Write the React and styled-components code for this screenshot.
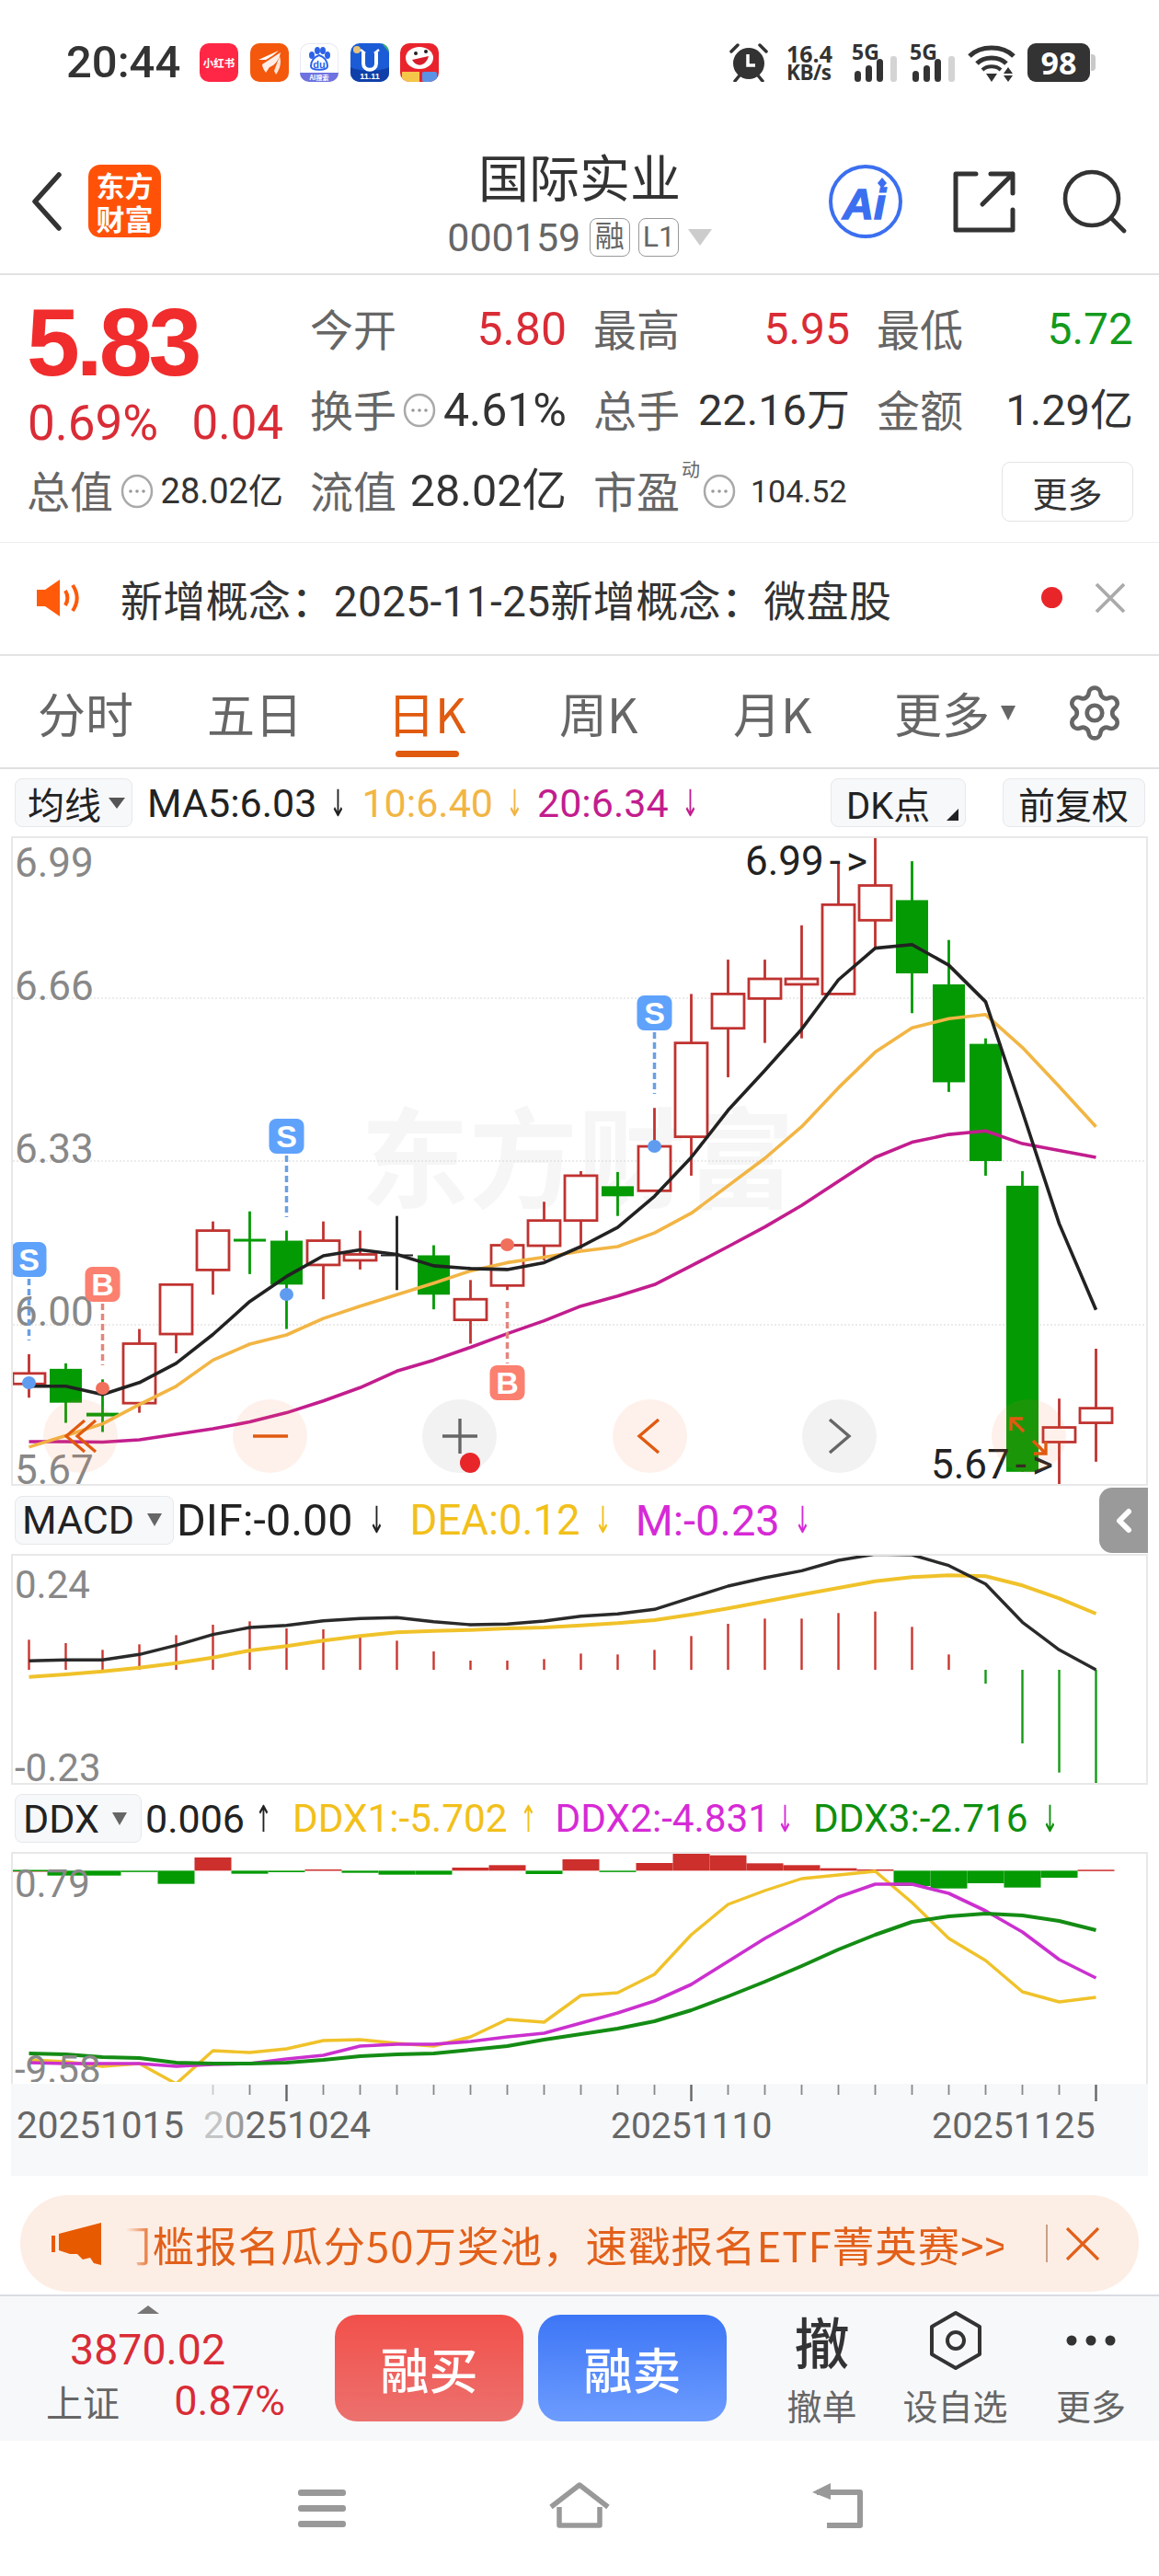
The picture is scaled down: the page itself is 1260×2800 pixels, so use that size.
import styled, { createGlobalStyle } from "styled-components";
import { ChevronLeft, Settings } from "lucide-react";

const sans = `Roboto, "Noto Sans CJK SC", sans-serif`;
const RED = "#d92c36";
const GREEN = "#149a1c";

// candle samples were read off the reference at 2.01 units per pixel
const toY = (v) => 860 + v / 2.01;
const slotX = (i) => 31.5 + 40 * i;

const candles = [
  ["r", 1230, 1272, 1295, 1325], ["g", 1250, 1262, 1336, 1380], ["g", 1285, 1358, 1366, 1400],
  ["r", 1175, 1207, 1337, 1358], ["r", 1078, 1078, 1186, 1228], ["r", 940, 960, 1046, 1100],
  ["g", 918, 978, 984, 1055], ["g", 960, 982, 1078, 1175], ["r", 940, 982, 1035, 1110],
  ["r", 960, 1012, 1025, 1045], ["k", 928, 1012, 1015, 1090], ["g", 992, 1014, 1100, 1132],
  ["r", 1068, 1110, 1155, 1207], ["r", 985, 992, 1080, 1090], ["r", 897, 938, 993, 1025],
  ["r", 830, 840, 938, 1000], ["g", 832, 863, 885, 928], ["r", 692, 776, 873, 873],
  ["r", 443, 550, 755, 840], ["r", 368, 443, 518, 625], ["r", 368, 410, 453, 550],
  ["r", 293, 410, 422, 540], ["r", 155, 248, 443, 443], ["r", 100, 206, 282, 343],
  ["g", 153, 238, 398, 485], ["g", 325, 422, 636, 657], ["g", 540, 552, 808, 840],
  ["g", 830, 862, 1487, 1487], ["r", 1327, 1390, 1422, 1518], ["r", 1218, 1348, 1380, 1465],
];
const ma5 = [1300, 1300, 1318, 1292, 1250, 1187, 1115, 1060, 1015, 1002, 1012, 1037, 1043, 1045, 1030, 995, 953, 885, 800, 697, 610, 520, 412, 343, 335, 380, 460, 700, 945, 1133];
const ma10 = [1433, 1408, 1382, 1340, 1300, 1243, 1208, 1188, 1152, 1125, 1100, 1075, 1048, 1030, 1018, 1005, 995, 965, 922, 862, 802, 733, 648, 570, 517, 497, 488, 560, 645, 733];
const ma20 = [1421, 1421, 1422, 1417, 1405, 1393, 1378, 1358, 1332, 1303, 1267, 1243, 1215, 1185, 1157, 1125, 1103, 1078, 1037, 995, 952, 905, 852, 800, 767, 750, 742, 770, 785, 800];

const signals = [
  { i: 0, kind: "S", badge: 1350, from: 1390, to: 1457, dot: 1503 },
  { i: 2, kind: "B", badge: 1377, from: 1417, to: 1484, dot: 1509 },
  { i: 7, kind: "S", badge: 1216, from: 1256, to: 1323, dot: 1407 },
  { i: 13, kind: "B", badge: 1484, from: 1415, to: 1482, dot: 1353 },
  { i: 17, kind: "S", badge: 1082, from: 1122, to: 1189, dot: 1246 },
];

// macd samples, page y = 1620 + v / 3
const macdY = (v) => 1620 + v / 3;
const dif = [556, 553, 553, 535, 505, 470, 447, 440, 425, 418, 415, 428, 438, 436, 426, 410, 403, 388, 350, 312, 285, 262, 228, 208, 210, 245, 305, 430, 520, 585];
const dea = [608, 600, 590, 578, 563, 545, 522, 508, 490, 475, 463, 458, 455, 450, 447, 440, 433, 423, 405, 385, 362, 340, 318, 296, 283, 277, 280, 310, 352, 402];
const macdBars = [487, 498, 520, 502, 472, 438, 427, 450, 453, 472, 490, 525, 555, 555, 550, 532, 535, 520, 475, 435, 418, 418, 400, 395, 445, 535, 630, 825, 920, 960];

const ddxBars = [1239, 1256, 1256, 1243, 1283, 1197, 1250, 1245, 1236, 1247, 1253, 1253, 1230, 1222, 1251, 1203, 1241, 1215, 1182, 1190, 1216, 1222, 1232, 1236, 1290, 1298, 1281, 1295, 1263, 1237];
const ddx1 = [2239, 2241, 2246, 2243, 2265, 2229, 2231, 2227, 2218, 2217, 2221, 2224, 2214, 2195, 2198, 2169, 2166, 2146, 2103, 2070, 2055, 2042, 2038, 2034, 2068, 2107, 2131, 2165, 2176, 2171];
const ddx2 = [2242, 2243, 2243, 2243, 2246, 2244, 2243, 2238, 2234, 2224, 2222, 2222, 2219, 2214, 2210, 2199, 2188, 2175, 2157, 2132, 2107, 2085, 2062, 2048, 2048, 2058, 2077, 2100, 2130, 2150];
const ddx3 = [2232, 2233, 2236, 2237, 2242, 2243, 2243, 2242, 2239, 2235, 2233, 2232, 2228, 2224, 2217, 2211, 2205, 2197, 2185, 2170, 2154, 2137, 2119, 2103, 2089, 2083, 2080, 2082, 2088, 2098];

const linePoints = (values, mapY = (v) => v) => values.map((v, i) => `${slotX(i)},${mapY(v).toFixed(1)}`).join(" ");

const GlobalStyle = createGlobalStyle`
  html, body { margin: 0; padding: 0; background: #fff; }
  body { font-family: ${sans}; }
  * { box-sizing: border-box; }
`;

const Page = styled.div`
  width: 1260px;
  height: 2800px;
  overflow: hidden;
  background: #fff;
  color: #333;
`;

/* status bar */
const StatusBar = styled.div`
  height: 130px;
  padding: 47px 70px 0 72px;
  display: flex;
  justify-content: space-between;
  align-items: flex-start;
`;
const StatusLeft = styled.div`
  display: flex;
  align-items: center;
  height: 42px;
`;
const Clock = styled.span`
  width: 145px;
  font-size: 49px;
  font-weight: 500;
  color: #333;
  line-height: 42px;
`;
const AppRow = styled.div`
  display: flex;
  gap: 12.6px;
`;
const AppIcon = styled.div`
  width: 42px;
  height: 42px;
  border-radius: 10px;
  overflow: hidden;
  background: ${(p) => p.$bg};
  display: flex;
  align-items: center;
  justify-content: center;
  color: #fff;
  font-size: 11.5px;
  font-weight: 700;
  font-family: "Noto Sans CJK SC", sans-serif;
  white-space: nowrap;
  svg { display: block; }
`;
const StatusRight = styled.div`
  display: flex;
  align-items: center;
  gap: 13px;
  height: 42px;
  svg { display: block; }
`;
const Speed = styled.div`
  width: 51px;
  margin: 0 7px;
  font-family: "Open Sans", sans-serif;
  font-weight: 700;
  color: #333;
  font-size: 25px;
  line-height: 22px;
  white-space: nowrap;
  small { display: block; font-size: 22.5px; line-height: 20px; letter-spacing: -0.5px; }
`;
const Battery = styled.div`
  width: 68px;
  height: 42px;
  margin-right: 5px;
  border-radius: 9px;
  background: #333;
  color: #fff;
  font-family: "Open Sans", sans-serif;
  font-weight: 700;
  font-size: 34px;
  line-height: 42px;
  text-align: center;
  position: relative;
  &::after {
    content: "";
    position: absolute;
    right: -6px;
    top: 12px;
    width: 5px;
    height: 18px;
    border-radius: 0 4px 4px 0;
    background: #c9c9c9;
  }
`;

/* title header */
const Header = styled.header`
  height: 169px;
  border-bottom: 2px solid #e2e2e2;
  display: grid;
  grid-template-columns: 1fr auto 1fr;
`;
const HeaderSide = styled.div`
  display: flex;
  align-items: center;
  padding-top: 10px;
  justify-content: ${(p) => (p.$right ? "flex-end" : "flex-start")};
  padding-left: ${(p) => (p.$right ? 0 : 32)}px;
  padding-right: ${(p) => (p.$right ? 35 : 0)}px;
  gap: ${(p) => (p.$right ? 50 : 26)}px;
`;
const LogoTile = styled.div`
  width: 79px;
  height: 79px;
  border-radius: 13px;
  background: #ff5208;
  color: #fff;
  font-family: "Noto Sans CJK SC", sans-serif;
  font-weight: 700;
  font-size: 31px;
  line-height: 36px;
  text-align: center;
  padding-top: 4px;
`;
const TitleBlock = styled.div`
  display: flex;
  flex-direction: column;
  align-items: center;
  padding-top: 30px;
`;
const StockName = styled.h1`
  margin: 0;
  height: 60px;
  font-size: 55px;
  line-height: 60px;
  font-weight: 400;
  color: #333;
  font-family: "Noto Sans CJK SC", sans-serif;
`;
const CodeRow = styled.div`
  margin-top: 16px;
  height: 44px;
  display: flex;
  align-items: center;
  gap: 9.5px;
  font-size: 43px;
  color: #666;
`;
const TagBox = styled.span`
  width: 44px;
  height: 42px;
  border: 1.5px solid #999;
  border-radius: 8px;
  color: #666;
  font-size: 32px;
  line-height: 38px;
  text-align: center;
`;
const DownTriangle = styled.i`
  display: block;
  width: 0;
  height: 0;
  border-left: ${(p) => p.$w / 2}px solid transparent;
  border-right: ${(p) => p.$w / 2}px solid transparent;
  border-top: ${(p) => p.$h}px solid ${(p) => p.$color};
`;

/* quote block */
const QuoteGrid = styled.section`
  height: 291px;
  padding: 15px 0 0 32px;
  border-bottom: 1px solid #ececec;
  display: grid;
  grid-template-columns: repeat(4, 276px);
  grid-auto-rows: 88px;
  column-gap: 32px;
`;
const Stat = styled.div`
  display: flex;
  align-items: center;
  justify-content: ${(p) => p.$justify || "space-between"};
  padding-top: ${(p) => p.$drop || 0}px;
  margin-left: ${(p) => p.$nudge || 0}px;
  white-space: nowrap;
`;
const BigPrice = styled.span`
  font-size: 104px;
  font-weight: 700;
  letter-spacing: -4px;
  font-family: "Liberation Sans", sans-serif;
  color: #f02c2c;
  line-height: 88px;
`;
const Label = styled.span`
  font-size: 47px;
  color: #666;
  font-family: "Noto Sans CJK SC", sans-serif;
  font-weight: 400;
  line-height: 60px;
  margin: 0 0 5px -3px;
`;
const Value = styled.span`
  font-size: ${(p) => p.$size || 48}px;
  color: ${(p) => p.$color || "#333"};
  line-height: 60px;
`;
const SuperMark = styled.sup`
  font-size: 20px;
  color: #666;
  align-self: flex-start;
  line-height: 20px;
  margin: 10px 3px 0 2px;
  font-family: "Noto Sans CJK SC", sans-serif;
`;
const MoreButton = styled.button`
  width: 143px;
  height: 65px;
  padding: 0;
  border: 1.5px solid #e4e4e4;
  border-radius: 9px;
  background: #fff;
  font: 400 38px "Noto Sans CJK SC", sans-serif;
  color: #333;
`;

/* notice */
const NoticeBar = styled.div`
  height: 123px;
  padding: 0 36px 2px 40px;
  border-bottom: 2px solid #e3e3e3;
  display: flex;
  align-items: center;
  color: #333;
`;
const NoticeText = styled.span`
  margin-left: 41px;
  flex: 1;
  font-size: 46px;
  letter-spacing: 0.35px;
  white-space: nowrap;
`;
const NoticeDot = styled.i`
  width: 23px;
  height: 23px;
  border-radius: 50%;
  background: #e8262a;
  margin-right: 35px;
`;

/* period tabs */
const TabBar = styled.nav`
  height: 123px;
  padding-top: 2px;
  border-bottom: 2px solid #e0e0e0;
  display: grid;
  grid-template-columns: 41px 184px 196px 187px 189px 175px 185px 103px;
  align-items: center;
`;
const Tab = styled.span`
  grid-column: ${(p) => p.$col};
  font-size: 52px;
  color: ${(p) => (p.$active ? "#e05a10" : "#666")};
  font-family: "Noto Sans CJK SC", sans-serif;
  position: relative;
  white-space: nowrap;
  display: flex;
  align-items: center;
  gap: 12px;
  &::after {
    content: "";
    display: ${(p) => (p.$active ? "block" : "none")};
    position: absolute;
    left: 9px;
    top: 79px;
    width: 69px;
    height: 7px;
    border-radius: 4px;
    background: #e05a10;
  }
`;

/* indicator rows */
const IndicatorRow = styled.div`
  height: ${(p) => p.$height || 71}px;
  padding: 0 15px 0 16px;
  display: flex;
  align-items: center;
  position: relative;
  font-size: 43px;
  white-space: nowrap;
`;
const SelectBox = styled.div`
  height: 53px;
  width: ${(p) => p.$w}px;
  flex: none;
  padding-left: ${(p) => p.$pad || 8}px;
  border: 1.5px solid #e6e8eb;
  border-radius: 8px;
  background: #f7f8fa;
  display: flex;
  align-items: center;
  gap: ${(p) => p.$gap || 8}px;
  font-size: ${(p) => p.$size || 43}px;
  color: #222;
  font-family: ${sans};
  position: relative;
`;
const CornerTip = styled.i`
  position: absolute;
  right: 7px;
  bottom: 6px;
  width: 0;
  height: 0;
  border-left: 13px solid transparent;
  border-bottom: 13px solid #222;
`;
const Reading = styled.span`
  color: ${(p) => p.$color};
  font-size: ${(p) => p.$size || 43}px;
  margin-left: ${(p) => p.$gap || 0}px;
  display: inline-flex;
  align-items: center;
`;
const Arrow = styled.span`
  width: 28px;
  text-align: center;
  font-family: "DejaVu Sans", sans-serif;
  font-size: 40px;
  margin-left: ${(p) => p.$gap ?? 8}px;
  transform: scaleX(0.55);
`;
const Spacer = styled.div`
  flex: 1;
`;
const SideHandle = styled.div`
  position: absolute;
  right: 12px;
  top: 2px;
  width: 53px;
  height: 71px;
  border-radius: 14px 0 0 14px;
  background: #9a9a9a;
  color: #fff;
  display: flex;
  align-items: center;
  justify-content: center;
`;

/* chart panels */
const ChartFrame = styled.div`
  margin: 0 12px;
  height: ${(p) => p.$height}px;
  border: 2px solid #e8e8e8;
  position: relative;
  svg.plot { display: block; width: 1232px; }
`;
const AxisText = styled.text`
  font-family: ${sans};
  font-size: ${(p) => p.$size || 44}px;
  fill: ${(p) => p.$fill || "#888"};
`;
const WatermarkText = styled.text`
  font-family: "Noto Sans CJK SC", sans-serif;
  font-weight: 700;
  font-size: 118px;
  fill: #f6f6f6;
`;
const BadgeText = styled.text`
  font-family: "Liberation Sans", sans-serif;
  font-weight: 700;
  font-size: 34px;
  fill: #fff;
  text-anchor: middle;
`;
const ControlRow = styled.div`
  position: absolute;
  left: 33px;
  right: 87px;
  bottom: 12px;
  display: flex;
  justify-content: space-between;
`;
const ControlKnob = styled.div`
  width: 81px;
  height: 80px;
  border-radius: 50%;
  background: ${(p) => (p.$warm ? "rgba(245, 120, 60, 0.1)" : "rgba(60, 60, 60, 0.065)")};
  display: flex;
  align-items: center;
  justify-content: center;
  position: relative;
  svg { display: block; }
`;
const RedPip = styled.i`
  position: absolute;
  left: 41px;
  top: 58px;
  width: 22px;
  height: 22px;
  border-radius: 50%;
  background: #e8262a;
`;
const DateAxis = styled.div`
  margin: 0 12px;
  height: 100px;
  background: #f7f8fa;
  svg { display: block; }
`;

/* promo banner */
const Banner = styled.div`
  margin: 21px 22px 0;
  height: 105px;
  border-radius: 52px;
  background: #fdeee5;
  padding-left: 34px;
  display: flex;
  align-items: center;
  color: #e2601a;
  svg { display: block; flex: none; }
`;
const BannerClip = styled.div`
  width: 954px;
  margin-left: 27px;
  overflow: hidden;
  flex: none;
  white-space: nowrap;
  font-family: "Noto Sans CJK SC", sans-serif;
  font-size: 45.5px;
  letter-spacing: 1px;
  mask-image: linear-gradient(to right, transparent 0, #000 30px);
  span { margin-left: -18px; display: inline-block; }
`;
const BannerRule = styled.i`
  width: 1.5px;
  height: 41px;
  margin-left: 46px;
  margin-right: 19px;
  background: #c9a08a;
  flex: none;
`;

/* bottom trade bar */
const TradeBar = styled.div`
  margin-top: 3px;
  height: 159px;
  border-top: 2px solid #d9dde2;
  background: #f7f8fa;
  display: flex;
`;
const IndexBlock = styled.div`
  width: 364px;
  flex: none;
  padding: 10px 0 0 50px;
`;
const IndexUp = styled.i`
  display: block;
  width: 0;
  margin-left: 99px;
  border-left: 12px solid transparent;
  border-right: 12px solid transparent;
  border-bottom: 9px solid #777;
`;
const IndexValue = styled.div`
  margin: 14px 0 0 26px;
  height: 50px;
  font-size: 46.5px;
  line-height: 50px;
  color: ${RED};
`;
const IndexMeta = styled.div`
  margin-top: 5px;
  width: 260px;
  display: flex;
  justify-content: space-between;
  align-items: center;
  font-size: 45px;
  line-height: 52px;
  color: ${RED};
  b { font-weight: 400; color: #666; font-size: 40px; font-family: "Noto Sans CJK SC", sans-serif; }
`;
const TradeButton = styled.button`
  width: 205px;
  height: 116px;
  margin: 20px 16px 0 0;
  padding: 0;
  border: 0;
  border-radius: 24px;
  flex: none;
  color: #fff;
  font: 500 53px "Noto Sans CJK SC", sans-serif;
  background: ${(p) => (p.$sell ? "linear-gradient(#3d76f6, #6d9cff)" : "linear-gradient(#f2504a, #ec716e)")};
`;
const Action = styled.div`
  width: ${(p) => p.$w}px;
  flex: none;
  padding-top: 15px;
  display: flex;
  flex-direction: column;
  align-items: center;
  font-family: "Noto Sans CJK SC", sans-serif;
  svg { display: block; }
`;
const ActionIcon = styled.div`
  height: 66px;
  display: flex;
  align-items: center;
  justify-content: center;
  font-size: 60px;
  font-weight: 500;
  color: #333;
  line-height: 66px;
`;
const ActionLabel = styled.span`
  margin-top: 17px;
  font-size: 38px;
  line-height: 40px;
  color: #666;
`;

/* android nav */
const NavBar = styled.div`
  padding-top: 45px;
  display: grid;
  grid-template-columns: repeat(3, 280px);
  justify-content: center;
  justify-items: center;
  svg { display: block; }
`;

const DotsBadge = () => (
  <svg width="36" height="38" viewBox="0 0 36 38" style={{ flex: "none" }}>
    <ellipse cx="18" cy="19" rx="16" ry="17" fill="none" stroke="#a9a9a9" strokeWidth="2.5" />
    <circle cx="11" cy="19" r="1.8" fill="#999" />
    <circle cx="18" cy="19" r="1.8" fill="#999" />
    <circle cx="25" cy="19" r="1.8" fill="#999" />
  </svg>
);

const Signal = () => (
  <svg width="50" height="42" viewBox="0 0 50 42">
    <text x="0" y="18" fontFamily="Open Sans" fontWeight="700" fontSize="23" fill="#333">5G</text>
    <rect x="3" y="30" width="7" height="12" rx="3.5" fill="#333" />
    <rect x="15" y="24" width="7" height="18" rx="3.5" fill="#333" />
    <rect x="27" y="17" width="7" height="25" rx="3.5" fill="#333" />
    <rect x="42" y="14" width="7" height="28" rx="3" fill="#d4d4d4" />
  </svg>
);

const PricePlot = () => (
  <svg className="plot" height="702" viewBox="14 911 1232 702">
    <WatermarkText x="392" y="1304">东方财富</WatermarkText>
    {[1085, 1262, 1440].map((y) => (
      <line key={y} x1="14" x2="1246" y1={y} y2={y} stroke="#d8d8d8" strokeWidth="1.2" strokeDasharray="2 2" />
    ))}
    <AxisText x="16" y="953">6.99</AxisText>
    <AxisText x="16" y="1087">6.66</AxisText>
    <AxisText x="16" y="1264">6.33</AxisText>
    <AxisText x="16" y="1441">6.00</AxisText>
    <AxisText x="16" y="1613">5.67</AxisText>
    {candles.map(([tone, high, top, bottom, low], i) => {
      const color = tone === "r" ? "#bf3330" : tone === "g" ? "#049a04" : "#222";
      const x = slotX(i);
      if (tone === "r") {
        return (
          <g key={i} stroke={color} strokeWidth="2.8">
            <line x1={x} x2={x} y1={toY(high)} y2={toY(top)} />
            <line x1={x} x2={x} y1={toY(bottom)} y2={toY(low)} />
            <rect x={x - 17.5} y={toY(top)} width="35" height={toY(bottom) - toY(top)} fill="#fff" />
          </g>
        );
      }
      return (
        <g key={i}>
          <line x1={x} x2={x} y1={toY(high)} y2={toY(low)} stroke={color} strokeWidth="2.8" />
          <rect x={x - 17.5} y={toY(top)} width="35" height={Math.max(toY(bottom) - toY(top), 2)} fill={color} />
        </g>
      );
    })}
    <polyline points={linePoints(ma20, toY)} fill="none" stroke="#c21d8e" strokeWidth="3.6" strokeLinejoin="round" />
    <polyline points={linePoints(ma10, toY)} fill="none" stroke="#f2b544" strokeWidth="3.6" strokeLinejoin="round" />
    <polyline points={linePoints(ma5, toY)} fill="none" stroke="#222" strokeWidth="3.6" strokeLinejoin="round" />
    {signals.map((s) => {
      const x = slotX(s.i);
      const isSell = s.kind === "S";
      return (
        <g key={s.i}>
          <line x1={x} x2={x} y1={s.from} y2={s.to} stroke={isSell ? "#6a9fe2" : "#e2867e"} strokeWidth="3.5" strokeDasharray="7 4" />
          <ellipse cx={x} cy={s.dot} rx="7.5" ry="7" fill={isSell ? "#5f9cf0" : "#f0705c"} />
          <rect x={x - 19} y={s.badge} width="38" height="38" rx="8" fill={isSell ? "#5fa2fb" : "#fb8070"} />
          <BadgeText x={x} y={s.badge + 31}>{s.kind}</BadgeText>
        </g>
      );
    })}
    <AxisText x="810" y="951" $fill="#222">6.99<tspan dx="6">-</tspan><tspan dx="6">{">"}</tspan></AxisText>
    <AxisText x="1012" y="1607" $fill="#222">5.67<tspan dx="6">-</tspan><tspan dx="6">{">"}</tspan></AxisText>
  </svg>
);

const MacdPlot = () => (
  <svg className="plot" height="247" viewBox="14 1691 1232 247">
    <AxisText x="16" y="1737" $size="42">0.24</AxisText>
    <AxisText x="16" y="1936" $size="42">-0.23</AxisText>
    {macdBars.map((end, i) => (
      <line key={i} x1={slotX(i)} x2={slotX(i)} y1={macdY(585)} y2={macdY(end)} stroke={end < 585 ? "#c9352f" : "#149a14"} strokeWidth="2.4" />
    ))}
    <polyline points={linePoints(dea, macdY)} fill="none" stroke="#f0c22a" strokeWidth="4" strokeLinejoin="round" />
    <polyline points={linePoints(dif, macdY)} fill="none" stroke="#2a2a2a" strokeWidth="3.4" strokeLinejoin="round" />
  </svg>
);

const DdxPlot = () => (
  <svg className="plot" height="248" viewBox="14 2015 1232 248">
    {ddxBars.map((end, i) => {
      const zero = macdY(1240);
      const y = macdY(end);
      return (
        <rect key={i} x={slotX(i) - 20} width="40" y={Math.min(y, zero)} height={Math.max(Math.abs(y - zero), 1.5)} fill={end < 1240 ? "#cc2f2c" : "#049a04"} />
      );
    })}
    <line x1="14" x2="52" y1={macdY(1240)} y2={macdY(1240)} stroke="#049a04" strokeWidth="1.5" />
    <AxisText x="16" y="2062" $size="42">0.79</AxisText>
    <polyline points={linePoints(ddx1)} fill="none" stroke="#f0c22a" strokeWidth="3.4" strokeLinejoin="round" />
    <polyline points={linePoints(ddx2)} fill="none" stroke="#cb30cf" strokeWidth="3.6" strokeLinejoin="round" />
    <polyline points={linePoints(ddx3)} fill="none" stroke="#148c14" strokeWidth="4" strokeLinejoin="round" />
    <AxisText x="16" y="2264" $size="42">-9.58</AxisText>
  </svg>
);

const DateStrip = () => (
  <svg width="1236" height="100" viewBox="12 2265 1236 100">
    {ddx1.map((_, i) => {
      if (i < 5) return null;
      const big = i === 7 || i === 18 || i === 29;
      return (
        <line key={i} x1={slotX(i)} x2={slotX(i)} y1="2266" y2={big ? 2284 : 2277} stroke={big ? "#666" : "#888"} strokeWidth={big ? 2.4 : 1.8} opacity={i === 5 ? 0.4 : 1} />
      );
    })}
    <AxisText x="18" y="2324" $size="40.5" $fill="#666">20251015</AxisText>
    <AxisText x="221" y="2324" $size="40.5" $fill="#666"><tspan fill="#c4c4c4">2</tspan><tspan fill="#9a9a9a">0</tspan>251024</AxisText>
    <AxisText x="664" y="2324" $size="39" $fill="#666">20251110</AxisText>
    <AxisText x="1013" y="2324" $size="39.5" $fill="#666">20251125</AxisText>
  </svg>
);

export default function App() {
  return (
    <Page>
      <GlobalStyle />
      <StatusBar>
        <StatusLeft>
          <Clock>20:44</Clock>
          <AppRow>
            <AppIcon $bg="#ff2745">小红书</AppIcon>
            <AppIcon $bg="#f4580c">
              <svg width="42" height="42" viewBox="0 0 42 42">
                <path d="M9 18 L31 8 C27 12 22 15 17 18 Z" fill="#fff" />
                <path d="M13 23 L33 10 C32 17 27 24 21 26 L17 32 C15 29 13 26 13 23 Z" fill="#fff" opacity="0.9" />
                <path d="M26 30 L32 14 C34 20 33 27 28 34 Z" fill="#fff" opacity="0.85" />
              </svg>
            </AppIcon>
            <AppIcon $bg="#fff" style={{ boxShadow: "inset 0 0 0 1px #e8e8f2" }}>
              <svg width="42" height="42" viewBox="0 0 42 42">
                <g fill="#2b62e8">
                  <ellipse cx="13" cy="13" rx="3" ry="4" />
                  <ellipse cx="19" cy="8" rx="3" ry="4" />
                  <ellipse cx="25" cy="8" rx="3" ry="4" />
                  <ellipse cx="30" cy="13" rx="3" ry="4" />
                </g>
                <path d="M21 13 C15 15 12 20 12 25 C12 30 30 30 30 25 C30 20 27 15 21 13 Z" fill="none" stroke="#2b62e8" strokeWidth="2" />
                <text x="21" y="27" textAnchor="middle" fontFamily="Liberation Sans" fontWeight="700" fontSize="11" fill="#2b62e8">du</text>
                <rect x="0" y="32" width="42" height="10" fill="#6d72e0" />
                <text x="21" y="40" textAnchor="middle" fontFamily="Noto Sans CJK SC" fontSize="7" fill="#fff">AI搜索</text>
              </svg>
            </AppIcon>
            <AppIcon $bg="#1b5cd6">
              <svg width="42" height="42" viewBox="0 0 42 42">
                <circle cx="7" cy="7" r="4" fill="#e8c27a" />
                <path d="M34 0 L42 0 L42 10 Z" fill="#36b36a" />
                <path d="M0 26 C10 31 32 31 42 26 L42 42 L0 42 Z" fill="#0f3fa8" />
                <path d="M14 10 V22 C14 31 28 31 28 22 V10" fill="none" stroke="#fff" strokeWidth="4" />
                <path d="M11 7 L16 11 M31 7 L26 11" stroke="#fff" strokeWidth="2.5" />
                <text x="21" y="39" textAnchor="middle" fontFamily="Liberation Sans" fontWeight="700" fontSize="9" fill="#fff">11.11</text>
              </svg>
            </AppIcon>
            <AppIcon $bg="#e9232c">
              <svg width="42" height="42" viewBox="0 0 42 42">
                <ellipse cx="21" cy="16" rx="15" ry="12" fill="#fff" />
                <path d="M13 18 C18 27 28 25 31 14 Z" fill="#d81e2a" />
                <circle cx="17" cy="11" r="2" fill="#222" />
                <circle cx="28" cy="9" r="2" fill="#222" />
                <rect x="2" y="31" width="19" height="11" fill="#f4c64a" />
                <rect x="24" y="31" width="16" height="11" rx="2" fill="#5a92e6" />
              </svg>
            </AppIcon>
          </AppRow>
        </StatusLeft>
        <StatusRight>
          <svg width="42" height="42" viewBox="0 0 42 42">
            <path d="M2 9 L9 2 M40 9 L33 2 M6 41 L11 35 M36 41 L31 35" stroke="#333" strokeWidth="3.5" strokeLinecap="round" />
            <circle cx="21" cy="22" r="17" fill="#333" />
            <path d="M20 12 V24 H28" fill="none" stroke="#fff" strokeWidth="3.5" />
          </svg>
          <Speed>16.4<small>KB/s</small></Speed>
          <Signal />
          <Signal />
          <svg width="52" height="42" viewBox="0 0 52 42">
            <path d="M2 14 C14 2 38 2 50 14" fill="none" stroke="#333" strokeWidth="5" />
            <path d="M10 22 C18 14 34 14 42 22" fill="none" stroke="#333" strokeWidth="5" />
            <path d="M16 29 C21 24 31 24 36 29" fill="none" stroke="#333" strokeWidth="4" />
            <path d="M20 33 H32 L26 42 Z" fill="#333" />
            <path d="M39 33 L44 26 L49 33 Z M39 35 H49 L44 42 Z" fill="#333" />
          </svg>
          <Battery>98</Battery>
        </StatusRight>
      </StatusBar>

      <Header>
        <HeaderSide>
          <svg width="38" height="64" viewBox="0 0 38 64">
            <path d="M32 3 L6 32 L32 61" fill="none" stroke="#333" strokeWidth="5.5" strokeLinecap="round" strokeLinejoin="round" />
          </svg>
          <LogoTile>东方<br />财富</LogoTile>
        </HeaderSide>
        <TitleBlock>
          <StockName>国际实业</StockName>
          <CodeRow>
            000159
            <TagBox>融</TagBox>
            <TagBox>L1</TagBox>
            <DownTriangle $w={26} $h={18} $color="#ccc" />
          </CodeRow>
        </TitleBlock>
        <HeaderSide $right>
          <svg width="84" height="84" viewBox="0 0 84 84">
            <circle cx="42" cy="42" r="38" fill="none" stroke="#3b6ff0" strokeWidth="4" />
            <text x="17" y="61" fontFamily="Liberation Sans" fontWeight="700" fontStyle="italic" fontSize="47" fill="#3b6ff0" stroke="#3b6ff0" strokeWidth="1.4">Ai</text>
            <path d="M60 16 L65 22 L60 28 L55 22 Z" fill="#3b6ff0" />
          </svg>
          <svg width="70" height="70" viewBox="0 0 70 70" style={{ marginLeft: 2 }}>
            <path d="M26 5 H4 V66 H66 V44 M42 5 H66 V26 M66 5 L33 38" fill="none" stroke="#333" strokeWidth="5" strokeLinecap="round" strokeLinejoin="round" />
          </svg>
          <svg width="70" height="70" viewBox="0 0 70 70">
            <circle cx="32" cy="32" r="29" fill="none" stroke="#333" strokeWidth="4.6" />
            <path d="M53 53 L67 67" stroke="#333" strokeWidth="4.6" strokeLinecap="round" />
          </svg>
        </HeaderSide>
      </Header>

      <QuoteGrid>
        <Stat $drop={28} $nudge={-3}><BigPrice>5.83</BigPrice></Stat>
        <Stat><Label>今开</Label><Value $color={RED} $size={50}>5.80</Value></Stat>
        <Stat><Label>最高</Label><Value $color={RED}>5.95</Value></Stat>
        <Stat><Label>最低</Label><Value $color={GREEN}>5.72</Value></Stat>

        <Stat $drop={28} $nudge={-2}><Value $color={RED} $size={53}>0.69%</Value><Value $color={RED} $size={51}>0.04</Value></Stat>
        <Stat><Label>换手</Label><DotsBadge /><Value $size={50}>4.61%</Value></Stat>
        <Stat><Label>总手</Label><Value $size={47}>22.16万</Value></Stat>
        <Stat><Label>金额</Label><Value $size={47}>1.29亿</Value></Stat>

        <Stat><Label>总值</Label><DotsBadge /><Value $size={38}>28.02亿</Value></Stat>
        <Stat><Label>流值</Label><Value $size={48.5}>28.02亿</Value></Stat>
        <Stat $justify="flex-start"><Label>市盈</Label><SuperMark>动</SuperMark><DotsBadge /><Value $size={34} style={{ marginLeft: 16 }}>104.52</Value></Stat>
        <Stat $justify="flex-end"><MoreButton>更多</MoreButton></Stat>
      </QuoteGrid>

      <NoticeBar>
        <svg width="50" height="42" viewBox="0 0 50 42" style={{ flex: "none" }}>
          <path d="M0 12 H9 L25 1 V41 L9 30 H0 Z" fill="#ff5a0a" />
          <path d="M31 13 C34 18 34 24 31 29" fill="none" stroke="#ff5a0a" strokeWidth="4" />
          <path d="M39 7 C45 16 45 26 39 35" fill="none" stroke="#ff5a0a" strokeWidth="4" />
        </svg>
        <NoticeText>新增概念：2025-11-25新增概念：微盘股</NoticeText>
        <NoticeDot />
        <svg width="34" height="34" viewBox="0 0 34 34" style={{ flex: "none" }}>
          <path d="M2 2 L32 32 M32 2 L2 32" stroke="#aaa" strokeWidth="3.8" />
        </svg>
      </NoticeBar>

      <TabBar>
        <Tab $col={2}>分时</Tab>
        <Tab $col={3}>五日</Tab>
        <Tab $col={4} $active>日K</Tab>
        <Tab $col={5}>周K</Tab>
        <Tab $col={6}>月K</Tab>
        <Tab $col={7}>更多<DownTriangle $w={16} $h={16} $color="#666" /></Tab>
        <Tab $col={8}><Settings size={66} strokeWidth={1.7} color="#666" /></Tab>
      </TabBar>

      <IndicatorRow $height={73}>
        <SelectBox $w={128} $pad={13} $size={40}>均线<DownTriangle $w={18} $h={12} $color="#555" /></SelectBox>
        <Reading $color="#222" $gap={16}>MA5:6.03<Arrow>↓</Arrow></Reading>
        <Reading $color="#f2b544" $gap={13}>10:6.40<Arrow>↓</Arrow></Reading>
        <Reading $color="#c21d8e" $gap={12}>20:6.34<Arrow>↓</Arrow></Reading>
        <Spacer />
        <SelectBox $w={147} $pad={16} $size={40}>DK点<CornerTip /></SelectBox>
        <SelectBox $w={155} $pad={16} $size={40} style={{ marginLeft: 40 }}>前复权</SelectBox>
      </IndicatorRow>

      <ChartFrame $height={706}>
        <PricePlot />
        <ControlRow>
          <ControlKnob $warm>
            <svg width="40" height="40" viewBox="0 0 40 40">
              <path d="M24 3 L4 20 L24 37 M36 3 L16 20 L36 37" fill="none" stroke="#e05a10" strokeWidth="3.2" />
            </svg>
          </ControlKnob>
          <ControlKnob $warm>
            <svg width="40" height="40" viewBox="0 0 40 40"><path d="M1 20 H39" stroke="#e05a10" strokeWidth="3.4" /></svg>
          </ControlKnob>
          <ControlKnob>
            <svg width="40" height="40" viewBox="0 0 40 40"><path d="M1 20 H39 M20 1 V39" stroke="#666" strokeWidth="3.4" /></svg>
            <RedPip />
          </ControlKnob>
          <ControlKnob $warm>
            <svg width="40" height="40" viewBox="0 0 40 40"><path d="M30 2 L9 20 L30 38" fill="none" stroke="#e05a10" strokeWidth="3.4" /></svg>
          </ControlKnob>
          <ControlKnob>
            <svg width="40" height="40" viewBox="0 0 40 40"><path d="M10 2 L31 20 L10 38" fill="none" stroke="#666" strokeWidth="3.4" /></svg>
          </ControlKnob>
          <ControlKnob $warm>
            <svg width="44" height="44" viewBox="0 0 44 44">
              <path d="M3 16 V3 H16 M3 3 L17 17 M41 28 V41 H28 M41 41 L27 27" fill="none" stroke="#e05a10" strokeWidth="3.4" />
            </svg>
          </ControlKnob>
        </ControlRow>
      </ChartFrame>

      <IndicatorRow $height={74}>
        <SelectBox $w={173} $pad={7} $gap={14}>MACD<DownTriangle $w={17} $h={14} $color="#666" /></SelectBox>
        <Reading $color="#222" $gap={3} $size={48.5}>DIF:-0.00<Arrow $gap={10}>↓</Arrow></Reading>
        <Reading $color="#f2c01a" $gap={24} $size={45.5}>DEA:0.12<Arrow $gap={9}>↓</Arrow></Reading>
        <Reading $color="#d62ad6" $gap={23} $size={47}>M:-0.23<Arrow $gap={9}>↓</Arrow></Reading>
        <SideHandle><ChevronLeft size={40} strokeWidth={3.6} /></SideHandle>
      </IndicatorRow>

      <ChartFrame $height={251}>
        <MacdPlot />
      </ChartFrame>

      <IndicatorRow $height={73}>
        <SelectBox $w={138} $pad={8} $gap={14}>DDX<DownTriangle $w={17} $h={14} $color="#666" /></SelectBox>
        <Reading $color="#222" $gap={4}>0.006<Arrow $gap={5}>↑</Arrow></Reading>
        <Reading $color="#f2c01a" $gap={19} $size={42.3}>DDX1:-5.702<Arrow $gap={7}>↑</Arrow></Reading>
        <Reading $color="#d62ad6" $gap={17} $size={42.3}>DDX2:-4.831<Arrow $gap={1}>↓</Arrow></Reading>
        <Reading $color="#0e8f0e" $gap={18} $size={42.3}>DDX3:-2.716<Arrow $gap={8}>↓</Arrow></Reading>
      </IndicatorRow>

      <ChartFrame $height={252} style={{ borderBottom: 0 }}>
        <DdxPlot />
      </ChartFrame>
      <DateAxis>
        <DateStrip />
      </DateAxis>

      <Banner>
        <svg width="54" height="46" viewBox="0 0 54 46">
          <rect x="0" y="14" width="4" height="18" fill="#e85a00" />
          <path d="M8 12 L54 0 V46 L46 44 L42 38 L34 40 L28 34 L20 34 L8 30 Z" fill="#e85a00" />
        </svg>
        <BannerClip><span>门槛报名瓜分50万奖池，速戳报名ETF菁英赛&gt;&gt;</span></BannerClip>
        <BannerRule />
        <svg width="38" height="36" viewBox="0 0 38 36">
          <path d="M2 1 L36 35 M36 1 L2 35" stroke="#e2601a" strokeWidth="3.2" />
        </svg>
      </Banner>

      <TradeBar>
        <IndexBlock>
          <IndexUp />
          <IndexValue>3870.02</IndexValue>
          <IndexMeta><b>上证</b>0.87%</IndexMeta>
        </IndexBlock>
        <TradeButton>融买</TradeButton>
        <TradeButton $sell style={{ marginRight: 31 }}>融卖</TradeButton>
        <Action $w={145}>
          <ActionIcon>撤</ActionIcon>
          <ActionLabel>撤单</ActionLabel>
        </Action>
        <Action $w={145}>
          <ActionIcon>
            <svg width="60" height="66" viewBox="0 0 60 66">
              <path d="M30 3 L56 18 V48 L30 63 L4 48 V18 Z" fill="none" stroke="#333" strokeWidth="4" strokeLinejoin="round" />
              <circle cx="30" cy="33" r="9" fill="none" stroke="#333" strokeWidth="4" />
            </svg>
          </ActionIcon>
          <ActionLabel>设自选</ActionLabel>
        </Action>
        <Action $w={150}>
          <ActionIcon>
            <svg width="54" height="12" viewBox="0 0 54 12">
              <circle cx="6" cy="6" r="5.5" fill="#333" />
              <circle cx="27" cy="6" r="5.5" fill="#333" />
              <circle cx="48" cy="6" r="5.5" fill="#333" />
            </svg>
          </ActionIcon>
          <ActionLabel>更多</ActionLabel>
        </Action>
      </TradeBar>

      <NavBar>
        <svg width="54" height="50" viewBox="0 0 54 50" style={{ marginTop: 8 }}>
          <rect x="1" y="0" width="52" height="7" rx="3" fill="#999" />
          <rect x="1" y="17" width="52" height="7" rx="3" fill="#999" />
          <rect x="1" y="34" width="52" height="7" rx="3" fill="#999" />
        </svg>
        <svg width="68" height="50" viewBox="0 0 68 50">
          <path d="M3 27 L34 3 L65 27 M12 27 V47 H56 V27" fill="none" stroke="#999" strokeWidth="5.5" strokeLinejoin="round" />
        </svg>
        <svg width="56" height="50" viewBox="0 0 56 50">
          <path d="M6 11 H53 V47 H17" fill="none" stroke="#999" strokeWidth="6" strokeLinejoin="round" />
          <path d="M21 1 L1 11 L21 19 Z" fill="#999" />
        </svg>
      </NavBar>
    </Page>
  );
}
